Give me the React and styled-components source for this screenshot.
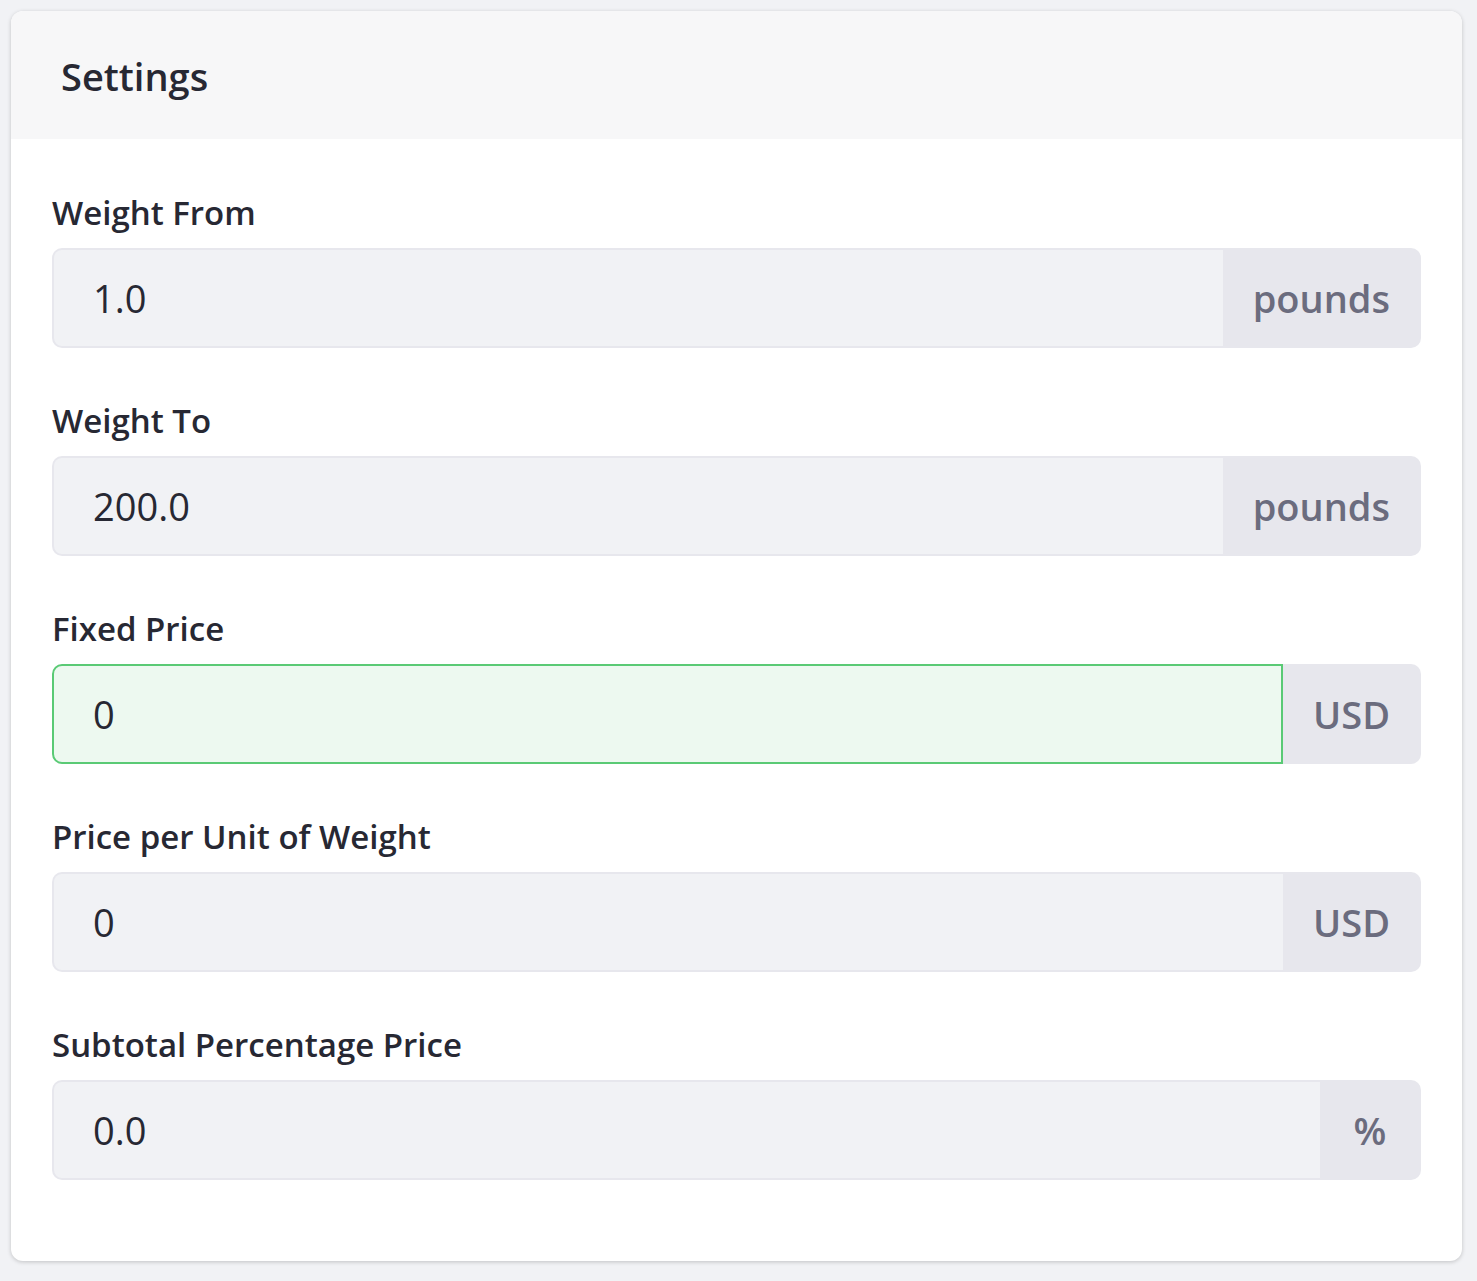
import React from 'react';
import styled, { createGlobalStyle } from 'styled-components';

const GlobalStyle = createGlobalStyle`
  html, body {
    margin: 0;
    padding: 0;
    background: #f1f2f5;
    font-family: "Open Sans", "Noto Sans", sans-serif;
  }
`;

const Page = styled.div`
  padding: 11px 15px 20px 11px;
`;

const Card = styled.div`
  background: #ffffff;
  border-radius: 12px;
  box-shadow: 0 1px 4px rgba(0, 0, 0, 0.2);
  overflow: hidden;
`;

const CardHeader = styled.div`
  display: flex;
  align-items: center;
  height: 128px;
  padding: 2px 50px 0;
  box-sizing: border-box;
  background: #f7f7f8;
`;

const Title = styled.h3`
  margin: 0;
  font-size: 38px;
  font-weight: 600;
  color: #272833;
`;

const CardBody = styled.div`
  padding: 61px 41px 81px;
`;

const FormGroup = styled.div`
  margin-bottom: 60px;

  &:last-child {
    margin-bottom: 0;
  }
`;

const Label = styled.label`
  display: block;
  margin-bottom: 22px;
  font-size: 33px;
  line-height: 26px;
  font-weight: 600;
  color: #272833;
`;

const InputGroup = styled.div`
  display: flex;
  height: 100px;
`;

const Input = styled.input`
  flex: 1;
  min-width: 0;
  box-sizing: border-box;
  height: 100%;
  padding: 0 39px;
  border: 2px solid ${(p) => (p.$valid ? '#5aca75' : '#e7e7ed')};
  border-right-width: ${(p) => (p.$valid ? '2px' : '0')};
  border-radius: 10px 0 0 10px;
  background: ${(p) => (p.$valid ? '#edf9f0' : '#f1f2f5')};
  font-family: inherit;
  font-size: 38px;
  color: #272833;
  outline: none;
`;

const Append = styled.span`
  display: flex;
  align-items: center;
  justify-content: center;
  box-sizing: border-box;
  min-width: 101px;
  padding: 0 31px 0 30px;
  border-radius: 0 10px 10px 0;
  background: #e7e7ed;
  font-size: 38px;
  font-weight: 600;
  color: #6b6c7e;
`;

const fields = [
  { label: 'Weight From', value: '1.0', unit: 'pounds' },
  { label: 'Weight To', value: '200.0', unit: 'pounds' },
  { label: 'Fixed Price', value: '0', unit: 'USD', valid: true },
  { label: 'Price per Unit of Weight', value: '0', unit: 'USD' },
  { label: 'Subtotal Percentage Price', value: '0.0', unit: '%' },
];

export default function App() {
  return (
    <Page>
      <GlobalStyle />
      <Card>
        <CardHeader>
          <Title>Settings</Title>
        </CardHeader>
        <CardBody>
          {fields.map((f) => (
            <FormGroup key={f.label}>
              <Label>{f.label}</Label>
              <InputGroup>
                <Input $valid={f.valid} defaultValue={f.value} readOnly />
                <Append>{f.unit}</Append>
              </InputGroup>
            </FormGroup>
          ))}
        </CardBody>
      </Card>
    </Page>
  );
}
